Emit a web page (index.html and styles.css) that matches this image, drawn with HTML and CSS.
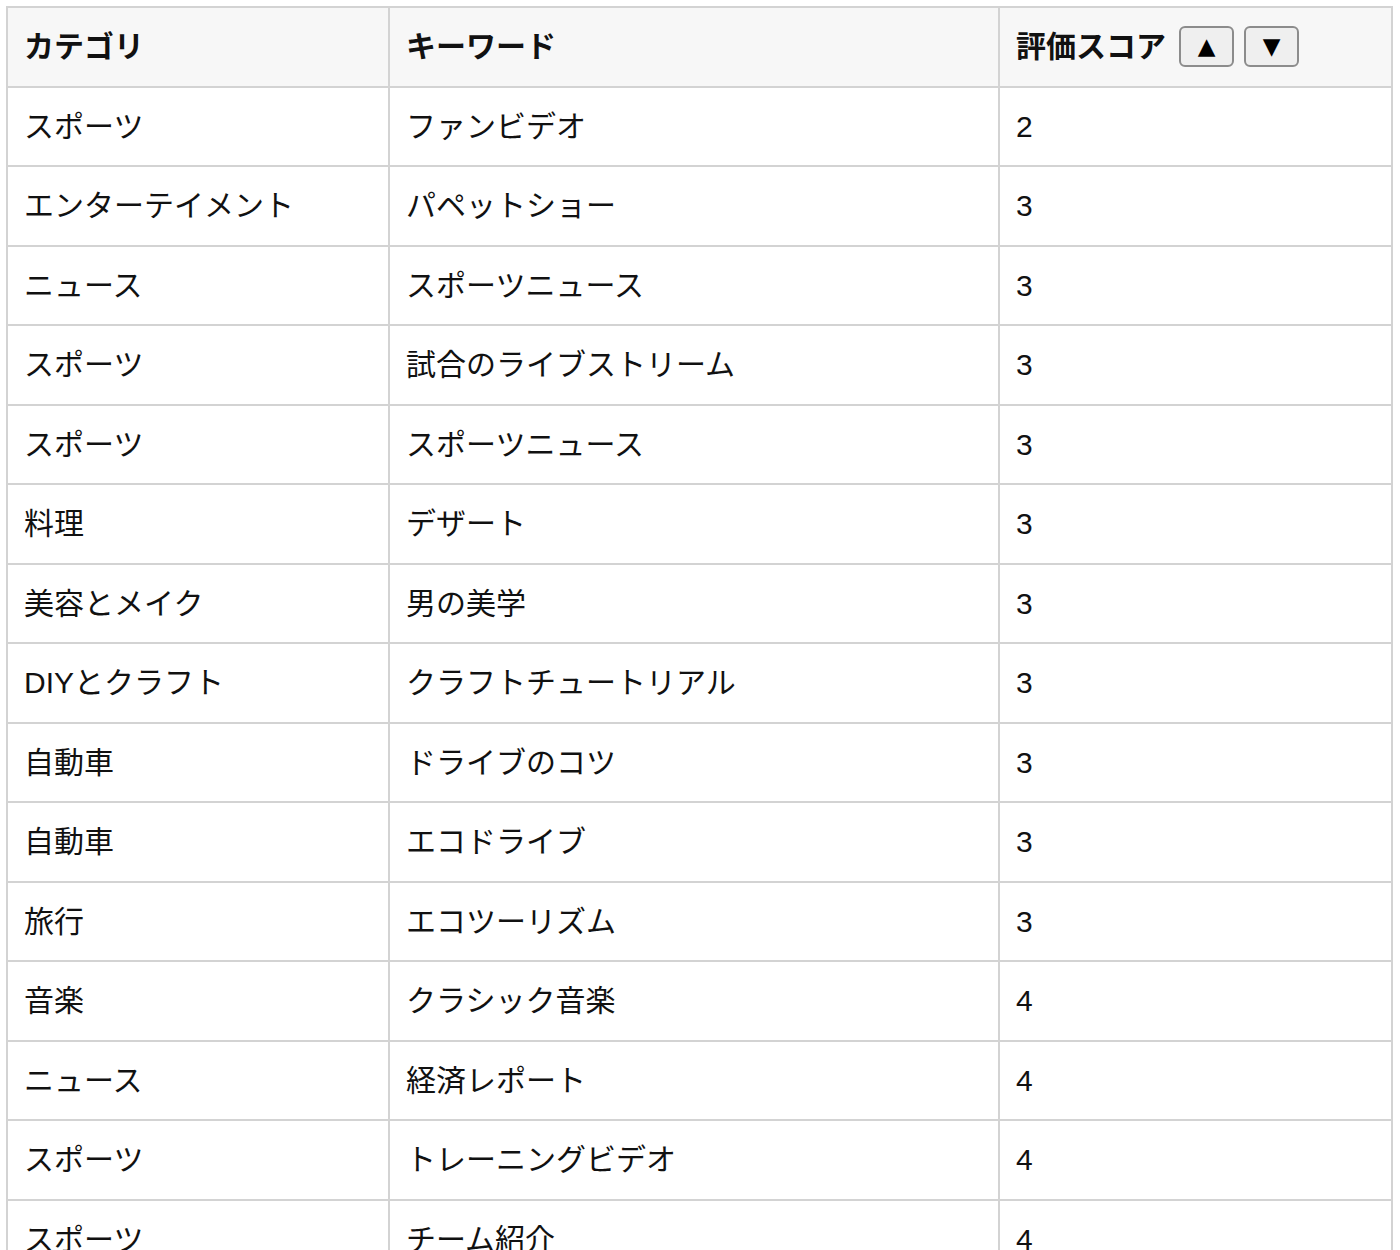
FILE: index.html
```html
<!DOCTYPE html>
<html lang="ja">
<head>
<meta charset="utf-8">
<title>評価スコア</title>
<link rel="stylesheet" href="styles.css">
</head>
<body>
<div class="wrap">
<table class="grid">
  <colgroup>
    <col class="c1"><col class="c2"><col class="c3">
  </colgroup>
  <thead>
    <tr>
      <th>カテゴリ</th>
      <th>キーワード</th>
      <th><span class="hcell">評価スコア<button class="sort" type="button">▲</button><button class="sort" type="button">▼</button></span></th>
    </tr>
  </thead>
  <tbody>
    <tr><td>スポーツ</td><td>ファンビデオ</td><td>2</td></tr>
    <tr><td>エンターテイメント</td><td>パペットショー</td><td>3</td></tr>
    <tr><td>ニュース</td><td>スポーツニュース</td><td>3</td></tr>
    <tr><td>スポーツ</td><td>試合のライブストリーム</td><td>3</td></tr>
    <tr><td>スポーツ</td><td>スポーツニュース</td><td>3</td></tr>
    <tr><td>料理</td><td>デザート</td><td>3</td></tr>
    <tr><td>美容とメイク</td><td>男の美学</td><td>3</td></tr>
    <tr><td>DIYとクラフト</td><td>クラフトチュートリアル</td><td>3</td></tr>
    <tr><td>自動車</td><td>ドライブのコツ</td><td>3</td></tr>
    <tr><td>自動車</td><td>エコドライブ</td><td>3</td></tr>
    <tr><td>旅行</td><td>エコツーリズム</td><td>3</td></tr>
    <tr><td>音楽</td><td>クラシック音楽</td><td>4</td></tr>
    <tr><td>ニュース</td><td>経済レポート</td><td>4</td></tr>
    <tr><td>スポーツ</td><td>トレーニングビデオ</td><td>4</td></tr>
    <tr><td>スポーツ</td><td>チーム紹介</td><td>4</td></tr>
  </tbody>
</table>
</div>
</body>
</html>
```

FILE: styles.css
```css
html, body {
  margin: 0;
  padding: 0;
  background: #ffffff;
}

.wrap {
  padding: 6px 0 0 6px;
}

.grid {
  border-collapse: collapse;
  table-layout: fixed;
  width: 1385px;
  font-family: "Liberation Sans", "Noto Sans CJK JP", sans-serif;
  font-size: 30px;
  color: #111111;
}

.c1 { width: 382px; }
.c2 { width: 610px; }
.c3 { width: 393px; }

.grid th,
.grid td {
  border: 2px solid #d3d3d3;
  padding: 17px 16px 17px 16px;
  line-height: 43.5px;
  text-align: left;
  vertical-align: middle;
  white-space: nowrap;
}

.grid th {
  background: #f7f7f7;
  font-weight: bold;
  color: #111111;
}

.hcell {
  display: inline-flex;
  align-items: center;
}

.sort {
  box-sizing: border-box;
  width: 55px;
  height: 41px;
  margin-left: 10px;
  padding: 0;
  border: 2px solid #8c8c8c;
  border-radius: 6px;
  background: #efefef;
  color: #000000;
  font-family: "DejaVu Sans", sans-serif;
  font-size: 23px;
  line-height: 1;
}

.sort:first-child {
  margin-left: 13px;
}
```
